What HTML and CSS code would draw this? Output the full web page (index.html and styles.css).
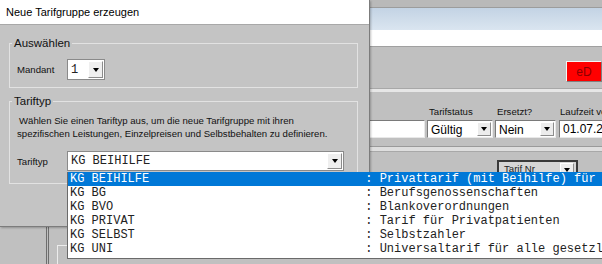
FILE: index.html
```html
<!DOCTYPE html>
<html lang="de">
<head>
    <meta charset="UTF-8">
    <title>Neue Tarifgruppe erzeugen</title>
    <link rel="stylesheet" href="styles.css">
</head>
<body>
    <!-- main window behind the dialog -->
    <div class="app">
        <div class="app-top"></div>
        <div class="app-ribbon"></div>
        <div class="app-strip"></div>
        <div class="app-toolbar">
            <button class="btn-red">eD</button>
        </div>
        <div class="app-sep"></div>
        <div class="app-form">
            <div class="field">
                <span class="field-label">Bezeichnung</span>
                <div class="input w-name"></div>
            </div>
            <div class="field">
                <span class="field-label">Tarifstatus</span>
                <div class="select w-status">
                    <span class="select-value">Gültig</span>
                    <span class="select-btn"><span class="arrow"></span></span>
                </div>
            </div>
            <div class="field">
                <span class="field-label">Ersetzt?</span>
                <div class="select w-replaced">
                    <span class="select-value">Nein</span>
                    <span class="select-btn"><span class="arrow"></span></span>
                </div>
            </div>
            <div class="field">
                <span class="field-label">Laufzeit von</span>
                <div class="input w-date">01.07.2018</div>
            </div>
        </div>
        <div class="app-sep2"></div>
        <div class="app-lower">
            <div class="side"></div>
            <div class="pane">
                <div class="pane-head">
                    <div class="col-select">
                        <span class="col-select-value">Tarif Nr</span>
                        <span class="select-btn"><span class="arrow"></span></span>
                    </div>
                </div>
                <div class="pane-box"></div>
            </div>
        </div>
    </div>

    <!-- dialog -->
    <div class="dialog">
        <div class="dialog-title">Neue Tarifgruppe erzeugen</div>
        <div class="dialog-body">
            <fieldset class="group group-select">
                <legend>Auswählen</legend>
                <div class="form-row row-mandant">
                    <label class="row-label">Mandant</label>
                    <div class="combo combo-small">
                        <span class="combo-value">1</span>
                        <span class="combo-btn"><span class="arrow"></span></span>
                    </div>
                </div>
            </fieldset>
            <fieldset class="group group-type">
                <legend>Tariftyp</legend>
                <p class="hint">Wählen Sie einen Tariftyp aus, um die neue Tarifgruppe mit ihren<br>spezifischen Leistungen, Einzelpreisen und Selbstbehalten zu definieren.</p>
                <div class="form-row row-type">
                    <label class="row-label">Tariftyp</label>
                    <div class="combo combo-wide">
                        <span class="combo-value">KG BEIHILFE</span>
                        <span class="combo-btn"><span class="arrow"></span></span>
                    </div>
                </div>
            </fieldset>
        </div>
    </div>

    <!-- open list of the Tariftyp combo -->
    <ul class="dropdown">
        <li class="selected"><span class="code">KG BEIHILFE</span><span class="desc">: Privattarif (mit Beihilfe) für Beamte</span></li>
        <li><span class="code">KG BG</span><span class="desc">: Berufsgenossenschaften</span></li>
        <li><span class="code">KG BVO</span><span class="desc">: Blankoverordnungen</span></li>
        <li><span class="code">KG PRIVAT</span><span class="desc">: Tarif für Privatpatienten</span></li>
        <li><span class="code">KG SELBST</span><span class="desc">: Selbstzahler</span></li>
        <li><span class="code">KG UNI</span><span class="desc">: Universaltarif für alle gesetzlichen Kassen</span></li>
    </ul>
</body>
</html>
```

FILE: styles.css
```css
* {
    margin: 0;
    padding: 0;
    box-sizing: border-box;
    font-family: "Liberation Sans", Arial, sans-serif;
}

body {
    width: 602px;
    height: 264px;
    overflow: hidden;
    position: relative;
    background-color: #c0c0c0;
    color: #000;
}

/* main window */
.app {
    height: 264px;
    display: flex;
    flex-direction: column;
}

.app > div {
    flex-shrink: 0;
}

.app-top {
    height: 8px;
    background-color: #b9b9b9;
    border-bottom: 1px solid #9c9c9c;
}

.app-ribbon {
    height: 22px;
    background: linear-gradient(#c3d3e4, #dae5f0);
}

.app-strip {
    height: 17px;
    background-color: #fff;
    border-bottom: 1px solid #a0a0a0;
}

.app-toolbar {
    height: 41px;
    display: flex;
    justify-content: flex-end;
    padding-top: 14px;
}

.btn-red {
    width: 36px;
    height: 21px;
    background-color: #ff0000;
    border: 1px solid #808080;
    border-top-color: #f4f4f4;
    border-left-color: #f4f4f4;
    color: #8a0000;
    font-size: 12px;
}

.app-sep {
    height: 4px;
    background-color: #e6e6e6;
    border-top: 1px solid #a8a8a8;
}

.app-form {
    height: 54px;
    display: flex;
    align-items: flex-end;
    padding-left: 300px;
    padding-bottom: 8px;
    gap: 2px;
}

.field {
    display: flex;
    flex-direction: column;
}

.field-label {
    font-size: 9.6px;
    line-height: 12px;
    margin-bottom: 2px;
    padding-left: 2px;
    color: #111;
    white-space: nowrap;
}

.input,
.select {
    height: 18px;
    background-color: #fff;
    border: 1px solid #e8e8e8;
    border-top-color: #7a7a7a;
    border-left-color: #7a7a7a;
    font-size: 12px;
    line-height: 16px;
    padding-left: 3px;
    white-space: nowrap;
    overflow: hidden;
}

.select {
    display: flex;
    justify-content: space-between;
    padding-right: 1px;
}

.select-value {
    padding-top: 1px;
}

.select-btn {
    width: 14px;
    height: 14px;
    margin-top: 1px;
    background-color: #ececec;
    border: 1px solid #8c8c8c;
    border-top-color: #fff;
    border-left-color: #fff;
    display: flex;
    justify-content: center;
    align-items: center;
}

.arrow {
    width: 0;
    height: 0;
    border-left: 3.5px solid transparent;
    border-right: 3.5px solid transparent;
    border-top: 4px solid #000;
}

.w-name { width: 125px; }
.w-status { width: 66px; }
.w-replaced { width: 61px; }
.w-date { width: 60px; margin-left: 1px; }

.app-sep2 {
    height: 6px;
    background-color: #dedede;
    border-top: 1px solid #9a9a9a;
    border-bottom: 1px solid #a8a8a8;
}

.app > .app-lower {
    flex: 1 1 auto;
    min-height: 0;
    overflow: hidden;
    display: flex;
}

.side {
    width: 46px;
}

.pane {
    flex: 1;
    border-left: 3px double #6e6e6e;
}

.pane-head {
    padding-top: 8px;
    padding-left: 448px;
}

.col-select {
    width: 81px;
    height: 20px;
    background-color: #d6d6d6;
    border: 2px solid #3a3a3a;
    display: flex;
    justify-content: space-between;
    padding: 0 2px 0 5px;
}

.col-select-value {
    font-size: 9.6px;
    line-height: 14px;
    color: #222;
}

.pane-box {
    margin-top: 65px;
    margin-left: 8px;
    height: 40px;
    border-top: 1px solid #ececec;
    border-left: 1px solid #ececec;
}

/* dialog */
.dialog {
    position: absolute;
    top: 0;
    left: 0;
    width: 370px;
    height: 227px;
    background-color: #c4c4c4;
    border-right: 1px solid #7c7c7c;
    border-bottom: 1px solid #7c7c7c;
    box-shadow: 1px 1px 2px rgba(0, 0, 0, 0.25);
}

.dialog-title {
    height: 25px;
    background-color: #fff;
    border-bottom: 1px solid #a8a8a8;
    padding-left: 6px;
    font-size: 11px;
    line-height: 24px;
    color: #000;
}

.dialog-body {
    padding-top: 11px;
}

.group {
    margin: 0 11px 0 9px;
    border: 1px solid #e2e2e2;
    padding: 0 0 0 7px;
}

.group legend {
    margin-left: -5px;
    padding: 0 2px;
    font-size: 11.5px;
    line-height: 14px;
    color: #111;
}

.group-select {
    padding-bottom: 7px;
}

.group-type {
    margin-top: 6px;
    padding-bottom: 12px;
}

.form-row {
    display: flex;
    align-items: center;
}

.row-mandant {
    margin-top: 9px;
    height: 21px;
}

.row-type {
    margin-top: 11px;
    height: 20px;
}

.row-label {
    width: 50px;
    font-size: 9.6px;
    color: #111;
}

.hint {
    margin-top: 6px;
    font-size: 9.6px;
    line-height: 13px;
    color: #111;
    text-indent: 2px;
}

.combo {
    height: 100%;
    background-color: #fff;
    border: 1px solid #8a8a8a;
    display: flex;
    justify-content: space-between;
    align-items: center;
    padding: 0 1px 0 3px;
}

.combo-small {
    width: 38px;
}

.combo-wide {
    width: 277px;
}

.combo-value {
    font-family: "Liberation Mono", "Courier New", monospace;
    font-size: 12px;
    color: #222;
}

.combo-btn {
    width: 15px;
    height: calc(100% - 2px);
    background-color: #efefef;
    border: 1px solid #8c8c8c;
    border-top-color: #fff;
    border-left-color: #fff;
    display: flex;
    justify-content: center;
    align-items: center;
}

/* dropdown list */
.dropdown {
    position: absolute;
    top: 172px;
    left: 67px;
    width: 560px;
    list-style: none;
    background-color: #fff;
    border: 1px solid #6a6a6a;
    border-top: none;
    padding-bottom: 2px;
}

.dropdown li {
    display: flex;
    height: 14px;
    padding-left: 2px;
    font-family: "Liberation Mono", "Courier New", monospace;
    font-size: 12px;
    line-height: 14px;
    color: #222;
    white-space: pre;
}

.dropdown li.selected {
    background-color: #0078d7;
    color: #fff;
}

.dropdown .code {
    font-family: inherit;
    width: 41ch;
    flex: none;
}

.dropdown .desc {
    font-family: inherit;
}
```
